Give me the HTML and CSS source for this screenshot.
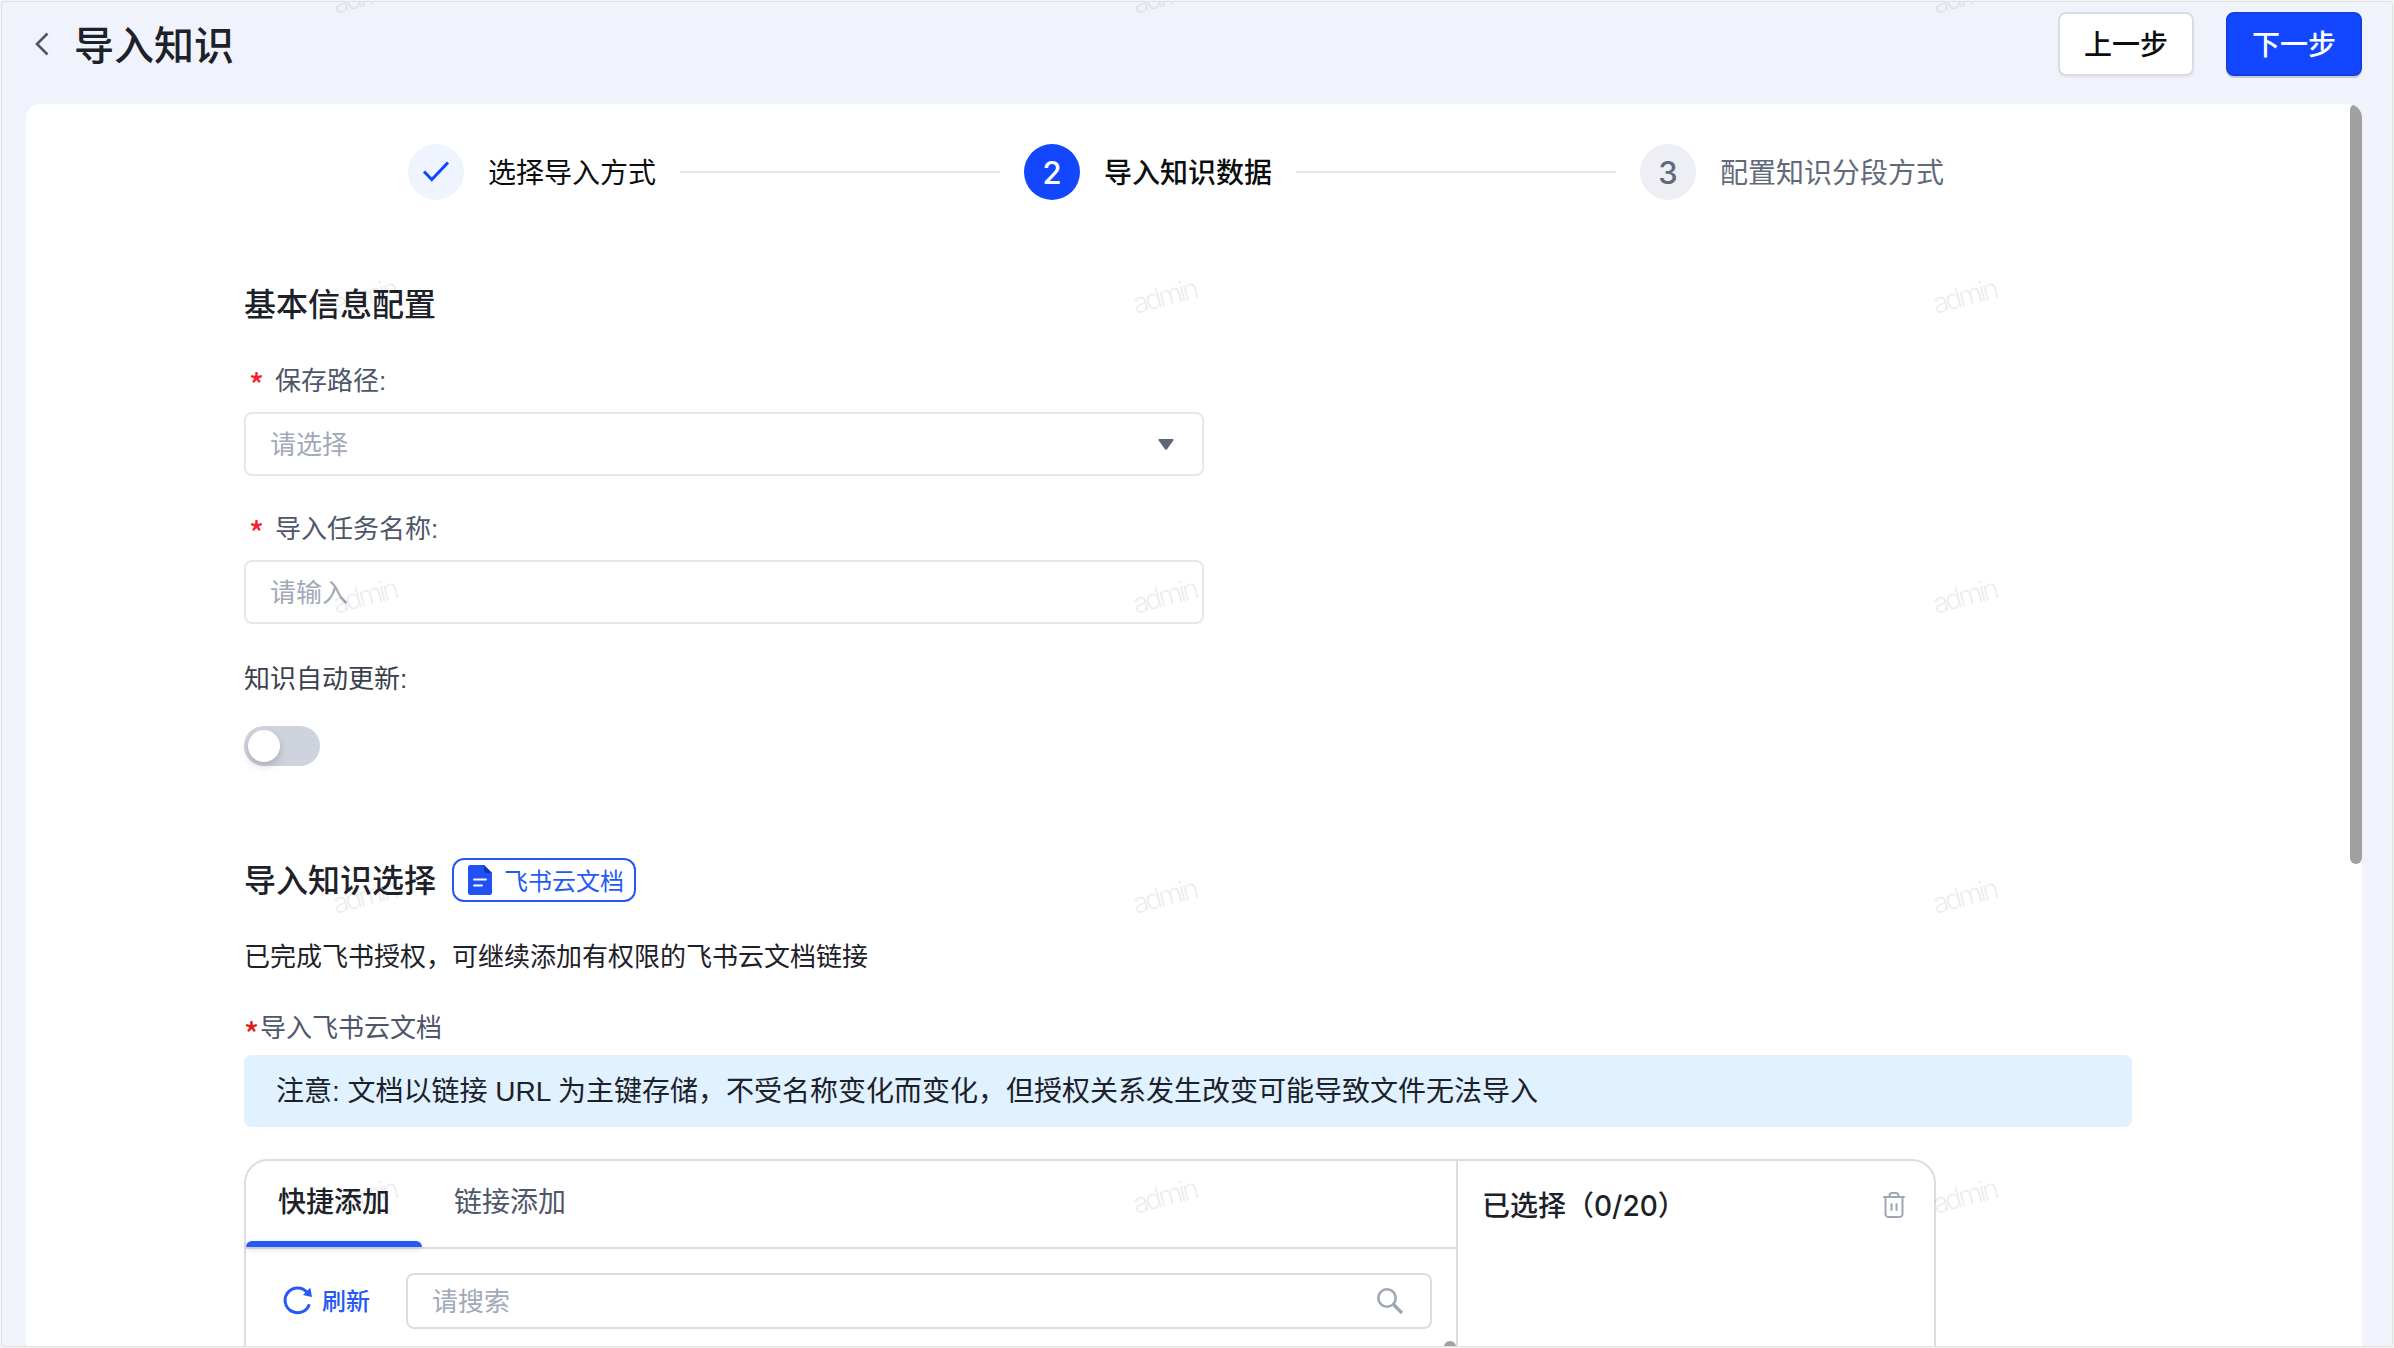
FILE: index.html
```html
<!DOCTYPE html>
<html lang="zh-CN">
<head>
<meta charset="utf-8">
<title>导入知识</title>
<link rel="stylesheet" href="styles.css">
</head>
<body>
<div class="app">
  <header class="topbar">
    <svg class="back" width="14" height="24" viewBox="0 0 14 24"><path d="M12.5 1.5 2 12l10.500 10.500" fill="none" stroke="#4e5669" stroke-width="2.600"/></svg>
    <h1 class="page-title">导入知识</h1>
    <button class="btn">上一步</button>
    <button class="btn btn-primary">下一步</button>
  </header>

  <main class="panel">
    <ol class="steps">
      <li class="step">
        <span class="dot dot-done"><svg width="28" height="28" viewBox="0 0 28 28"><path d="M2 13.500 9.800 21.500 26 4.500" fill="none" stroke="#1347ff" stroke-width="3"/></svg></span>
        <span class="step-name">选择导入方式</span><span class="line"></span>
      </li>
      <li class="step step-active">
        <span class="dot dot-active">2</span>
        <span class="step-name">导入知识数据</span><span class="line"></span>
      </li>
      <li class="step step-wait">
        <span class="dot dot-wait">3</span>
        <span class="step-name">配置知识分段方式</span>
      </li>
    </ol>

    <section class="basic">
      <h2 class="heading">基本信息配置</h2>
      <label class="label"><span class="req">*</span>保存路径:</label>
      <div class="field"><span class="placeholder">请选择</span><svg width="16" height="11" viewBox="0 0 16 11"><path d="M1.200 0h13.600q1.200.4.500 1.600L9 10.200q-1 1-2 0L.7 1.600Q0 .4 1.200 0z" fill="#5e6677"/></svg></div>
      <label class="label label-second"><span class="req">*</span>导入任务名称:</label>
      <div class="field"><span class="placeholder">请输入</span></div>
      <label class="label label-switch">知识自动更新:</label>
      <div class="switch"><span class="knob"></span></div>
    </section>

    <section class="source">
      <div class="source-head">
        <h2 class="heading">导入知识选择</h2>
        <span class="tag"><svg width="24" height="30" viewBox="0 0 24 30"><path d="M2.500 0H16l8 8v19.500a2.500 2.500 0 0 1-2.500 2.500h-19A2.500 2.500 0 0 1 0 27.500v-25A2.500 2.500 0 0 1 2.500 0z" fill="#2151f5"/><path d="M16 0l8 8h-6a2 2 0 0 1-2-2z" fill="#1033c4"/><path d="M6 14.500h12M6 20.500h8" stroke="#fff" stroke-width="1.800" stroke-linecap="round"/></svg><span class="tag-text">飞书云文档</span></span>
      </div>
      <p class="desc">已完成飞书授权，可继续添加有权限的飞书云文档链接</p>
      <p class="doc-label"><span class="req req-tight">*</span>导入飞书云文档</p>
      <div class="notice">注意: 文档以链接 URL 为主键存储，不受名称变化而变化，但授权关系发生改变可能导致文件无法导入</div>

      <div class="picker">
        <div class="picker-left">
          <nav class="tabs">
            <span class="tab tab-on">快捷添加</span>
            <span class="tab">链接添加</span>
          </nav>
          <div class="tools">
            <span class="refresh"><svg width="30" height="30" viewBox="0 0 30 30"><path d="M26.300 18.200A12.400 12.400 0 1 1 24.200 6.600" fill="none" stroke="#2459f5" stroke-width="3"/><path d="M27.300 1.800 29 10.900l-9.100-1.800z" fill="#2459f5"/></svg><span class="refresh-text">刷新</span></span>
            <div class="search"><span class="placeholder">请搜索</span><svg width="28" height="28" viewBox="0 0 28 28"><circle cx="11" cy="11" r="8.700" fill="none" stroke="#9fa6b5" stroke-width="2.600"/><path d="M17.300 17.300 26 26" stroke="#9fa6b5" stroke-width="3.400"/></svg></div>
          </div>
          <span class="inner-thumb"></span>
        </div>
        <div class="picker-right">
          <span>已选择（<span class="count">0/20</span>）</span>
          <svg width="22" height="26" viewBox="0 0 22 26" fill="none" stroke="#9fa6b5" stroke-width="2" stroke-linecap="round"><path d="M1 5h20M6.500 5V3.500A2.500 2.500 0 0 1 9 1h4a2.500 2.500 0 0 1 2.500 2.500V5M2.500 5v17a3 3 0 0 0 3 3h11a3 3 0 0 0 3-3V5M8.500 12v6M13.500 12v6"/></svg>
        </div>
      </div>
    </section>
    <span class="thumb"></span>
  </main>
  <svg class="watermark" width="2394" height="1348">
    <defs><pattern id="wm" x="316" y="-48" width="800" height="300" patternUnits="userSpaceOnUse"><text x="18" y="60" transform="rotate(-15 18 60)">admin</text></pattern></defs>
    <rect width="2394" height="1348" fill="url(#wm)"/>
  </svg>
</div>
</body>
</html>
```
FILE: styles.css
```css
* { box-sizing: border-box; }
body { margin: 0; padding: 1px; height: 1348px; overflow: hidden; background: #f5f5f5; font-family: "Liberation Sans", "Noto Sans CJK SC", sans-serif; color: #1d2129; }
h1, h2, p, ol { margin: 0; padding: 0; }
.app { position: relative; width: 2392px; height: 1346px; overflow: hidden; background: #f0f3fc; border: 1px solid #dfe0e2; border-radius: 3px; display: flex; flex-direction: column; }
.topbar { height: 102px; flex: none; padding: 10px 30px 0 33px; display: flex; align-items: flex-start; }
.back { margin: 20px 25px 0 0; }
.page-title { font-size: 40px; line-height: 68px; font-weight: 500; margin-right: auto; }
.btn { width: 136px; height: 64px; border: 2px solid #dcdcdc; border-radius: 8px; background: #fff; color: #0c0d0e; font: 500 28px/56px "Liberation Sans", "Noto Sans CJK SC", sans-serif; padding: 3px 0 0; box-shadow: 0 2px 1px rgba(0,0,0,.04); margin-left: 32px; }
.btn-primary { background: #1347ff; border-color: #1140e0; color: #fff; box-shadow: 0 2px 1px rgba(0,0,0,.18); }
.panel { position: relative; flex: 1; min-height: 0; margin: 0 30px 0 24px; background: #fff; border-radius: 14px 14px 0 0; padding: 40px 0 0 218px; overflow: hidden; }

/* Step indicator */
.steps { list-style: none; display: flex; padding-left: 164px; height: 56px; }
.step { width: 592px; margin-right: 24px; display: flex; align-items: center; font-size: 28px; color: #0c0d0e; }
.dot { width: 56px; height: 56px; border-radius: 50%; display: flex; align-items: center; justify-content: center; margin-right: 24px; font: 500 31px Inter, sans-serif; flex: none; }
.dot-done { background: #eff4ff; }
.dot-active { background: #1347ff; color: #fff; }
.dot-wait { background: #eeeff4; color: #626a7a; }
.step-name { white-space: nowrap; padding-bottom: 2px; }
.step-active .step-name { font-weight: 500; }
.step-wait { color: #626a7a; margin-right: 0; }
.line { flex: 1; height: 2px; background: #e5e8ee; margin-left: 24px; }

/* Form */
.basic { width: 960px; margin-top: 81px; }
.heading { font-size: 32px; line-height: 49px; height: 48px; font-weight: 500; }
.label { display: flex; margin-top: 30px; padding-left: 5px; height: 44px; line-height: 45px; font-size: 26px; color: #4e5669; }
.label-second { margin-top: 31px; }
.label-switch { margin-top: 33px; padding-left: 0; color: #3a414d; }
.field { margin-top: 9px; height: 64px; border: 2px solid #e5e9ef; border-radius: 8px; display: flex; align-items: center; justify-content: space-between; padding: 0 28px 0 24px; font-size: 26px; }
.placeholder { color: #a2a9b8; padding-bottom: 3px; }
.req { width: 26px; color: #f5222d; font: 500 31px/50px "Noto Sans CJK SC", sans-serif; }
.req-tight { width: 16px; color: #e02020; line-height: 50px; }
.switch { width: 76px; height: 40px; margin-top: 25px; border-radius: 20px; background: #ced3de; padding: 4px; }
.knob { display: block; width: 32px; height: 32px; border-radius: 50%; background: #fff; box-shadow: 0 4px 8px rgba(0,0,0,.18); }

/* Document source */
.source { margin-top: 91px; }
.source-head { display: flex; }
.tag { display: flex; align-items: center; width: 184px; height: 44px; border: 2px solid #2459f5; border-radius: 12px; color: #2459f5; font-size: 24px; padding-left: 14px; margin: 1px 0 0 16px; }
.tag svg { margin-right: 12px; }
.tag-text { padding-bottom: 2px; }
.desc { font-size: 26px; line-height: 42px; height: 40px; margin-top: 31px; }
.doc-label { display: flex; font-size: 26px; line-height: 41px; height: 40px; margin-top: 32px; color: #4e5669; }
.notice { width: 1888px; height: 72px; margin-top: 7px; border-radius: 8px; background: #e0f1ff; padding-left: 32px; line-height: 74px; font-size: 28px; }
.picker { width: 1692px; height: 400px; margin-top: 32px; border: 2px solid #dadde5; border-radius: 24px; display: flex; }
.picker-left { position: relative; width: 1212px; border-right: 2px solid #dadde5; }
.tabs { height: 88px; border-bottom: 2px solid #dadde5; display: flex; }
.tab { padding: 0 32px; height: 86px; line-height: 83px; font-size: 28px; color: #4e5669; }
.tab-on { position: relative; color: #1d2129; font-weight: 500; }
.tab-on::after { content: ""; position: absolute; left: 0; bottom: 0; width: 100%; height: 6px; border-radius: 6px 6px 0 0; background: #2459f5; box-shadow: 0 2px 6px rgba(0,0,0,.14); }
.tools { display: flex; padding: 24px 24px 0 37px; align-items: center; }
.refresh { display: flex; align-items: center; width: 123px; color: #2459f5; font-size: 24px; font-weight: 500; gap: 9px; }
.refresh-text { padding-bottom: 4px; }
.search { flex: 1; height: 56px; border: 2px solid #dadde5; border-radius: 8px; display: flex; align-items: center; justify-content: space-between; padding: 0 26px 0 24px; font-size: 26px; }
.inner-thumb { position: absolute; right: 0; top: 180px; width: 12px; height: 100px; border-radius: 6px; background: #a0a0a0; }
.picker-right { flex: 1; display: flex; align-items: flex-start; justify-content: space-between; padding: 24px 29px 0 24px; font-size: 28px; line-height: 43px; font-weight: 500; }
.count { font-family: Inter, sans-serif; }
.picker-right svg { margin-top: 7px; }
.thumb { position: absolute; right: 0; top: 0; width: 12px; height: 760px; border-radius: 6px; background: #a0a0a0; }
.watermark { position: absolute; left: 0; top: 0; pointer-events: none; }
.watermark text { font: 300 28px Inter, sans-serif; letter-spacing: -3.200px; fill: rgba(0,0,0,.07); }
```
